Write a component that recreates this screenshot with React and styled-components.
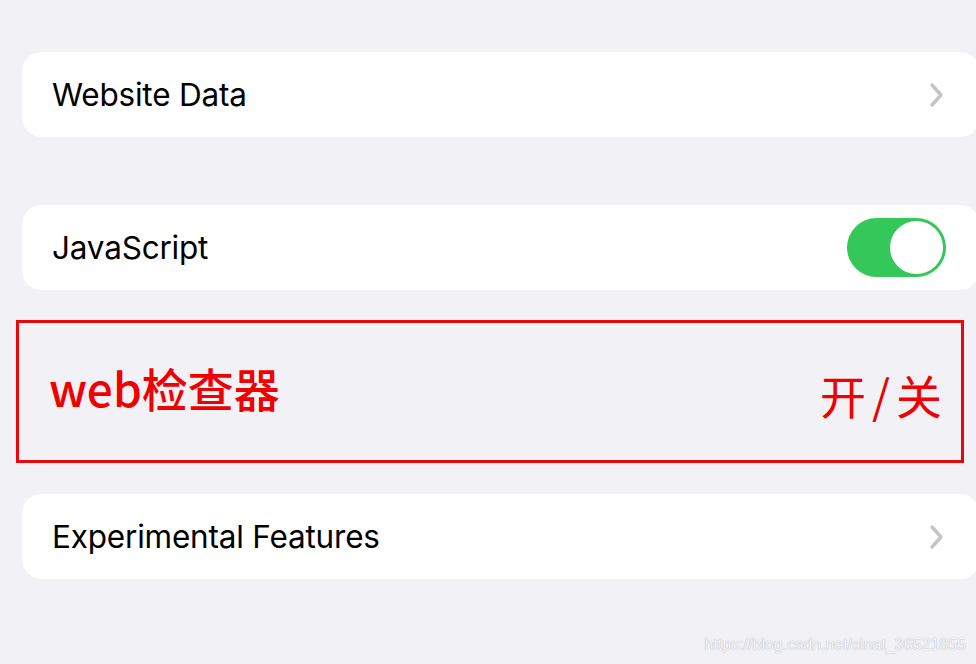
import React from 'react';
import styled, { createGlobalStyle } from 'styled-components';

const GlobalStyle = createGlobalStyle`
    html, body {
        margin: 0;
        padding: 0;
        background: #f1f1f6;
    }
    #root {
        min-height: 664px;
    }
`;

const Page = styled.div`
    position: relative;
    width: 976px;
    height: 664px;
    overflow: hidden;
    padding-top: 52px;
    box-sizing: border-box;
    font-family: Inter, "Noto Sans", sans-serif;
    background: #f1f1f6;
`;

const Card = styled.div`
    display: flex;
    align-items: center;
    height: 85px;
    margin-left: 22px;
    margin-right: -4px;
    margin-top: ${(p) => p.$top || 0}px;
    padding: 0 30px;
    background: #ffffff;
    border-radius: 20px;
`;

const Label = styled.div`
    font-size: 31.5px;
    color: #000;
    letter-spacing: -0.2px;
`;

const Chevron = styled.svg`
    margin-left: auto;
    margin-right: 5px;
    width: 16px;
    height: 26px;
`;

const Toggle = styled.div`
    margin-left: auto;
    margin-right: 4px;
    width: 99px;
    height: 59px;
    border-radius: 30px;
    background: #34c759;
    display: flex;
    align-items: center;
    justify-content: flex-end;
    padding: 0 3px;
    box-sizing: border-box;
`;

const Knob = styled.div`
    width: 53px;
    height: 53px;
    border-radius: 50%;
    background: #fff;
`;

const Highlight = styled.div`
    display: flex;
    align-items: center;
    justify-content: space-between;
    margin: 30px 12px 31px 16px;
    height: 143px;
    box-sizing: border-box;
    border: 3px solid #e8070b;
    padding: 0 19px 0 30px;
    color: #f00000;
    font-family: "Noto Sans CJK SC", sans-serif;
`;

const RedTitle = styled.div`
    font-size: 46px;
    font-weight: 500;
    margin-top: -10px;
`;

const RedSwitch = styled.div`
    font-size: 46px;
    letter-spacing: 6px;
    margin-right: -6px;
    margin-top: 4px;
`;

const Watermark = styled.div`
    position: absolute;
    right: 10px;
    bottom: 10px;
    font-family: "Liberation Sans", sans-serif;
    font-size: 16px;
    color: #f4f4f8;
    text-shadow: 0 0 1px #bdbdc4, 0 0 1px #bdbdc4;
`;

const Arrow = () => (
    <Chevron viewBox="0 0 16 26">
        <path d="M3 3 L12 13 L3 23" fill="none" stroke="#c4c4c7" strokeWidth="3.4" strokeLinecap="round" strokeLinejoin="round" />
    </Chevron>
);

export default () => {
    return (
        <>
            <GlobalStyle />
            <Page>
                <Card>
                    <Label>Website Data</Label>
                    <Arrow />
                </Card>
                <Card $top={68}>
                    <Label>JavaScript</Label>
                    <Toggle><Knob /></Toggle>
                </Card>
                <Highlight>
                    <RedTitle>web检查器</RedTitle>
                    <RedSwitch>开/关</RedSwitch>
                </Highlight>
                <Card>
                    <Label>Experimental Features</Label>
                    <Arrow />
                </Card>
                <Watermark>https://blog.csdn.net/sinat_36521855</Watermark>
            </Page>
        </>
    );
};
